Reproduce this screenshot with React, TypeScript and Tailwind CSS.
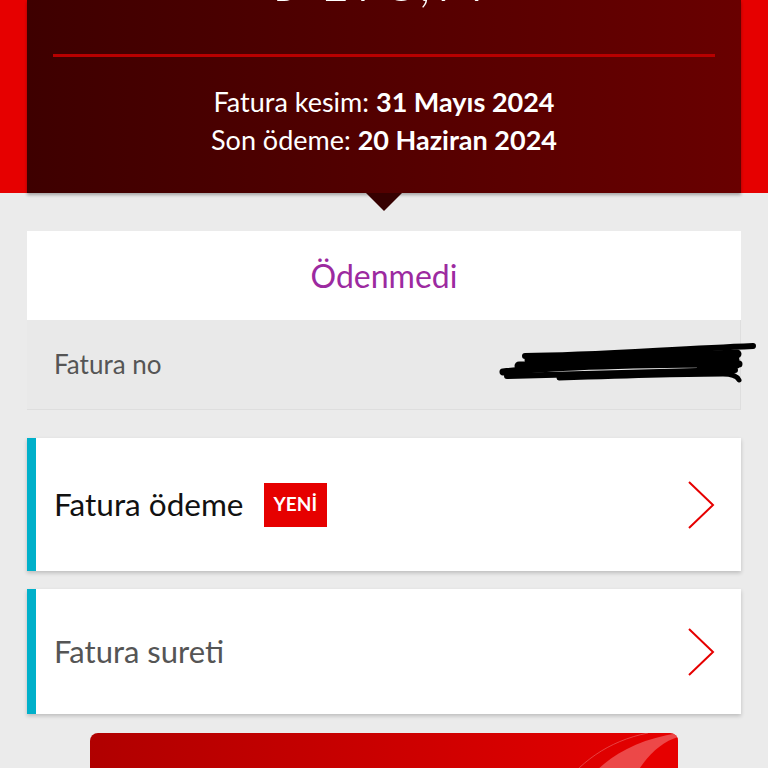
import React from 'react';

function Chevron() {
  return (
    <svg width="30" height="50" viewBox="0 0 30 50" fill="none">
      <path d="M2 2 L26 25 L2 48" stroke="#e60000" strokeWidth="2" strokeLinejoin="miter" />
    </svg>
  );
}

function Scribble() {
  return (
    <svg width="262" height="50" viewBox="0 0 262 50" fill="none" strokeLinecap="round">
      <path d="M4 36 C60 30 140 28 240 28" stroke="#000" strokeWidth="7" />
      <path d="M8 40 C70 38 150 36 236 34" stroke="#000" strokeWidth="6" />
      <path d="M26 20 C90 20 160 14 254 10" stroke="#000" strokeWidth="6" />
      <path d="M30 24 C100 24 170 20 238 18" stroke="#000" strokeWidth="9" />
      <path d="M20 30 C90 30 170 24 236 24" stroke="#000" strokeWidth="9" />
      <path d="M60 42 C120 40 180 38 224 38 C232 38 238 40 240 44" stroke="#000" strokeWidth="5" />
      <path d="M200 30 L238 30" stroke="#000" strokeWidth="5" />
    </svg>
  );
}

export default function App() {
  return (
    <div className="w-[768px] h-[768px] overflow-hidden bg-[#ebebeb]" style={{ fontFamily: 'Lato, "Noto Sans", sans-serif' }}>
      {/* header */}
      <div className="relative bg-[#e60000] px-[27px]">
        <div className="h-[193px] bg-gradient-to-r from-[#3e0000] to-[#690000] overflow-hidden flex flex-col items-center shadow-[0_2px_3px_rgba(0,0,0,0.3)]">
          <div className="mt-[-46px] text-white text-[54px] leading-[54px] font-light tracking-[2px]">₺ 198,99</div>
          <div className="mt-[46px] w-[662px] h-[3px] bg-[#b80000]" />
          <div className="mt-[26px] text-white text-[27px] leading-[38px] text-center">
            <div>Fatura kesim: <span className="font-bold">31 Mayıs 2024</span></div>
            <div>Son ödeme: <span className="font-bold">20 Haziran 2024</span></div>
          </div>
        </div>
        <div className="absolute left-[366px] top-[193px] w-0 h-0 border-l-[18px] border-r-[18px] border-t-[18px] border-l-transparent border-r-transparent border-t-[#360000]" />
      </div>

      <div className="px-[27px] pt-[38px] flex flex-col">
        {/* status card */}
        <div className="bg-white h-[89px] flex items-center justify-center text-[#9c2aa0] text-[32px]">Ödenmedi</div>
        <div className="relative bg-[#e9e9e9] h-[90px] border-r border-b border-[#dedede] flex items-center pl-[27px] text-[#555] text-[26px]">
          Fatura no
          <div className="absolute left-[472px] top-[16px]">
            <Scribble />
          </div>
        </div>

        {/* pay */}
        <div className="mt-[28px] bg-white h-[133px] border-l-[9px] border-[#00b0ca] shadow-[0_2px_4px_rgba(0,0,0,0.2)] flex items-center pl-[18px] pr-[24px]">
          <span className="text-[#111] text-[31.5px]">Fatura ödeme</span>
          <span className="ml-[20px] bg-[#e60000] text-white font-bold text-[19px] h-[44px] px-[10px] flex items-center">YENİ</span>
          <div className="ml-auto"><Chevron /></div>
        </div>

        <div className="mt-[18px] bg-white h-[125px] border-l-[9px] border-[#00b0ca] shadow-[0_2px_4px_rgba(0,0,0,0.2)] flex items-center pl-[18px] pr-[24px]">
          <span className="text-[#555] text-[31px]">Fatura sureti</span>
          <div className="ml-auto"><Chevron /></div>
        </div>
      </div>

      {/* promo card */}
      <div className="mx-[90px] mt-[19px] h-[60px] rounded-t-[8px] overflow-hidden relative bg-gradient-to-r from-[#b00000] to-[#e60000]">
        <svg className="absolute right-0 top-0" width="200" height="60" viewBox="0 0 200 60">
          <path d="M100 60 C120 30 150 8 200 0 L200 60 Z" fill="#ef5a5a" opacity="0.8" />
          <path d="M150 60 C160 30 180 10 200 4 L200 60 Z" fill="#e60000" />
          <path d="M80 60 C100 30 130 8 170 0" stroke="#f08080" strokeWidth="1" fill="none" opacity="0.5" />
        </svg>
      </div>
    </div>
  );
}
